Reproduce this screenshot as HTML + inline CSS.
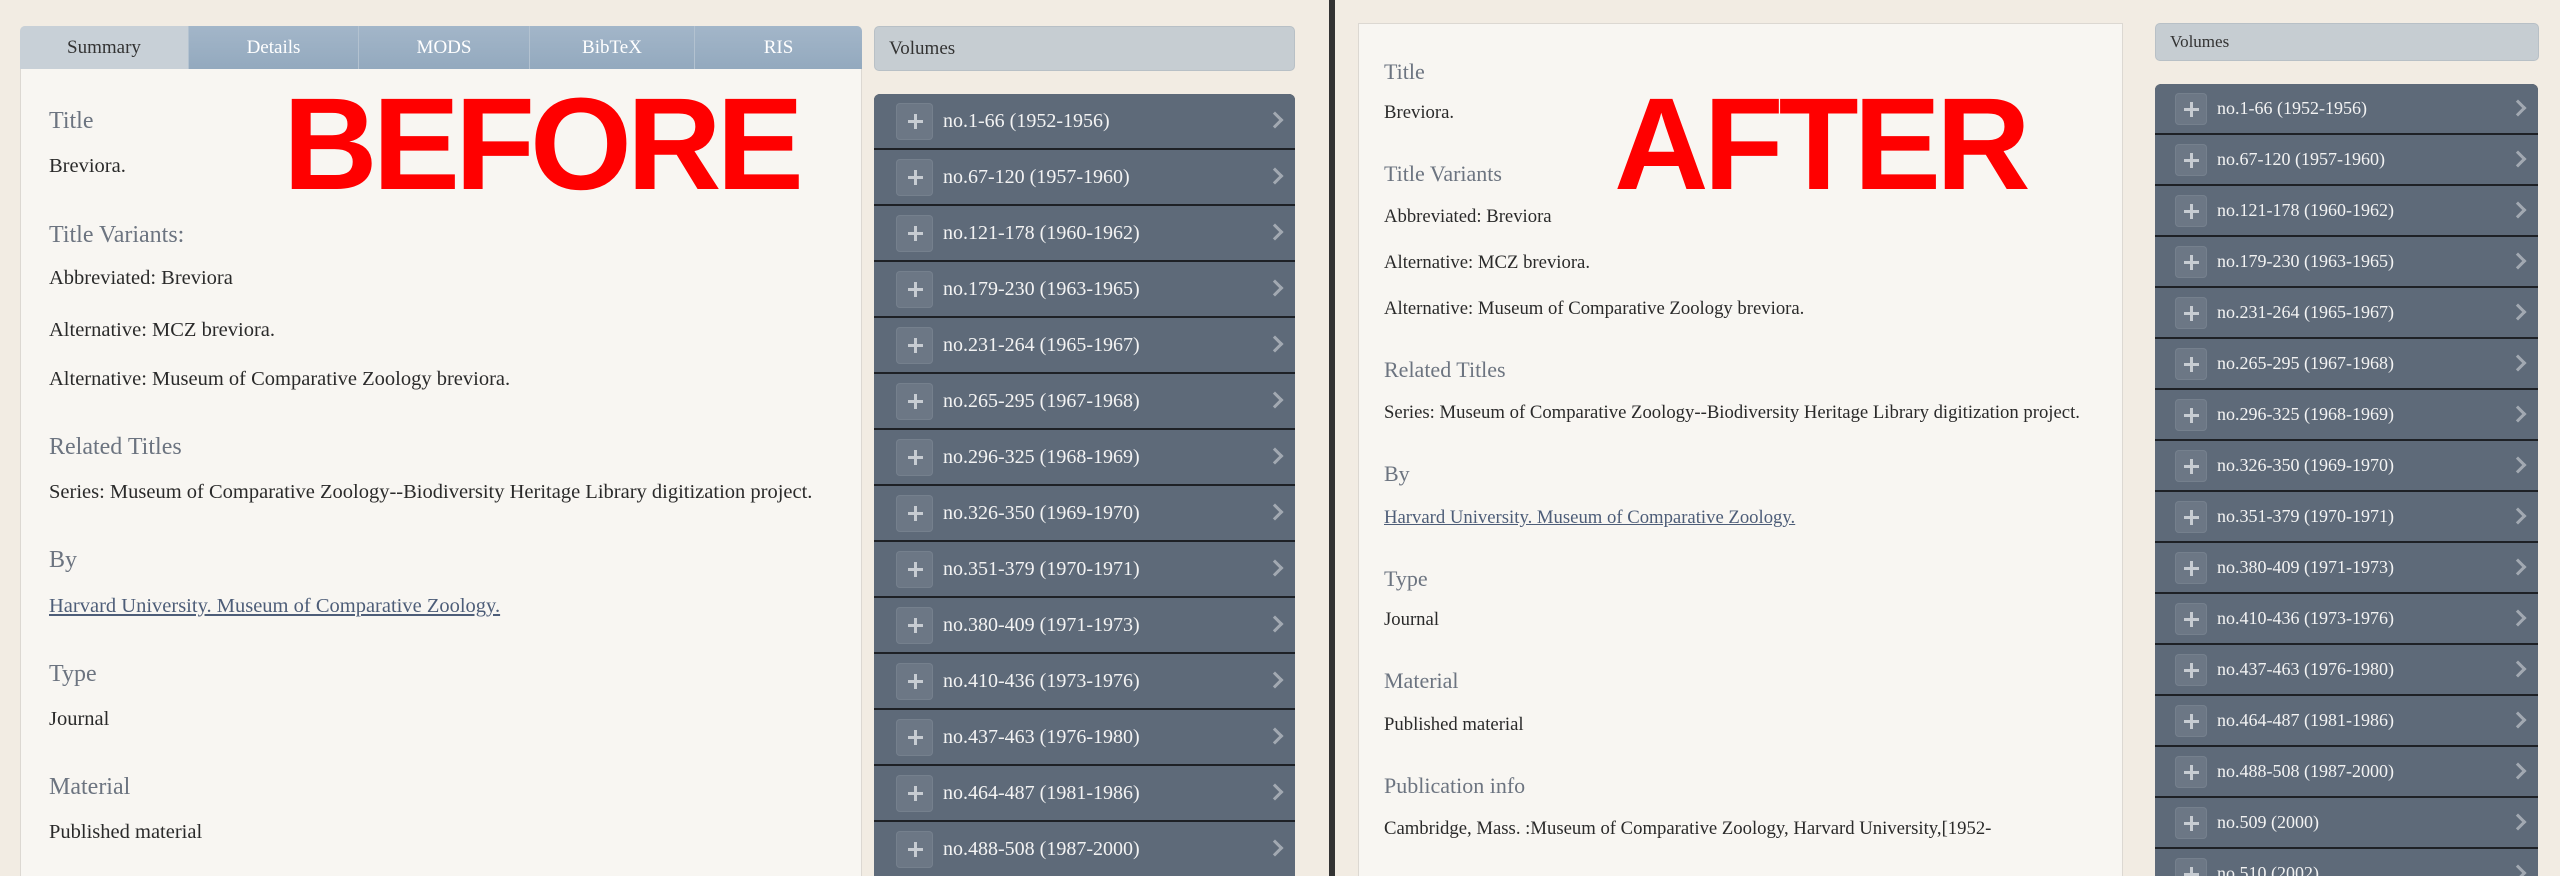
<!DOCTYPE html>
<html style="overflow:hidden;height:876px"><head><meta charset="utf-8"><style>
*{margin:0;padding:0;box-sizing:border-box}
body{width:2560px;height:876px;overflow:hidden;background:#f2ece3;font-family:"Liberation Serif",serif;position:relative}
.abs{position:absolute}
.panel{background:#f8f6f2;border:1px solid #dcd8d2;border-bottom:none}
.h{position:absolute;color:#6c7480;font-size:24px;white-space:nowrap}
.t{position:absolute;color:#2a2a2a;font-size:20.5px;white-space:nowrap}
.r .h{font-size:22px}
.r .t{font-size:18.7px}
.lnk{color:#4d5d78;text-decoration:underline}
.tab{position:absolute;top:26px;height:43px;line-height:43px;text-align:center;font-size:19px;color:#fff;background:linear-gradient(#a3b6c9,#93a9be);border-right:1px solid #b3c2d0}
.volh{position:absolute;background:#c6cdd2;border-radius:5px;border:1px solid #b8c0c6;color:#333;font-size:19px;padding-left:14px}
.list{position:absolute;border-radius:6px 6px 0 0;overflow:hidden;background:#222}
.row{position:relative;background:#5e6a79;border-bottom:2px solid #1e2126;color:#f3f3f3;white-space:nowrap}
.row .p{position:absolute;left:20px;width:37px;height:37px;border-radius:4px;background:#6c7785;box-shadow:inset 0 0 0 1px #75808d}
.row .p:before{content:"";position:absolute;left:calc(50% - 7px);top:calc(50% - 1.5px);width:15px;height:3px;background:#c7ccd2}
.row .p:after{content:"";position:absolute;left:calc(50% - 1px);top:calc(50% - 7.5px);width:3px;height:15px;background:#c7ccd2}
.row .c{position:absolute;right:14px;width:12px;height:12px;border-top:3px solid #a2a9b2;border-right:3px solid #a2a9b2;transform:rotate(45deg)}
.big{position:absolute;color:#ff0000;font-family:"Liberation Sans",sans-serif;font-weight:bold;font-size:131px;line-height:1;white-space:nowrap}
</style></head><body>
<div class="abs" style="left:1329px;top:0;width:6px;height:876px;background:#333"></div>

<div class="abs panel" style="left:20px;top:26px;width:842px;height:850px;border-radius:5px 5px 0 0"></div>
<div class="tab" style="left:20px;width:169px;background:#c8d0d7;color:#333;border-radius:5px 0 0 0">Summary</div>
<div class="tab" style="left:189px;width:170px">Details</div>
<div class="tab" style="left:359px;width:171px">MODS</div>
<div class="tab" style="left:530px;width:165px">BibTeX</div>
<div class="tab" style="left:695px;width:167px;border-right:none;border-radius:0 5px 0 0">RIS</div>
<div class="h" style="left:49px;top:108px">Title</div>
<div class="t" style="left:49px;top:155px">Breviora.</div>
<div class="h" style="left:49px;top:222px">Title Variants:</div>
<div class="t" style="left:49px;top:267px">Abbreviated: Breviora</div>
<div class="t" style="left:49px;top:319px">Alternative: MCZ breviora.</div>
<div class="t" style="left:49px;top:368px">Alternative: Museum of Comparative Zoology breviora.</div>
<div class="h" style="left:49px;top:434px">Related Titles</div>
<div class="t" style="left:49px;top:481px">Series: Museum of Comparative Zoology--Biodiversity Heritage Library digitization project.</div>
<div class="h" style="left:49px;top:547px">By</div>
<div class="t lnk" style="left:49px;top:595px">Harvard University. Museum of Comparative Zoology.</div>
<div class="h" style="left:49px;top:661px">Type</div>
<div class="t" style="left:49px;top:708px">Journal</div>
<div class="h" style="left:49px;top:774px">Material</div>
<div class="t" style="left:49px;top:821px">Published material</div>
<div class="big" style="left:283px;top:78px;letter-spacing:-5px">BEFORE</div>

<div class="volh" style="left:874px;top:26px;width:421px;height:45px;line-height:43px">Volumes</div>
<div class="list" style="left:874px;top:94px;width:421px;height:782px"><div id="L"></div></div>

<div class="r">
<div class="abs panel" style="left:1358px;top:23px;width:765px;height:853px"></div>
<div class="h" style="left:1384px;top:59px">Title</div>
<div class="t" style="left:1384px;top:102px">Breviora.</div>
<div class="h" style="left:1384px;top:161px">Title Variants</div>
<div class="t" style="left:1384px;top:206px">Abbreviated: Breviora</div>
<div class="t" style="left:1384px;top:252px">Alternative: MCZ breviora.</div>
<div class="t" style="left:1384px;top:298px">Alternative: Museum of Comparative Zoology breviora.</div>
<div class="h" style="left:1384px;top:357px">Related Titles</div>
<div class="t" style="left:1384px;top:402px">Series: Museum of Comparative Zoology--Biodiversity Heritage Library digitization project.</div>
<div class="h" style="left:1384px;top:461px">By</div>
<div class="t lnk" style="left:1384px;top:507px">Harvard University. Museum of Comparative Zoology.</div>
<div class="h" style="left:1384px;top:566px">Type</div>
<div class="t" style="left:1384px;top:609px">Journal</div>
<div class="h" style="left:1384px;top:668px">Material</div>
<div class="t" style="left:1384px;top:714px">Published material</div>
<div class="h" style="left:1384px;top:773px">Publication info</div>
<div class="t" style="left:1384px;top:818px">Cambridge, Mass. :Museum of Comparative Zoology, Harvard University,[1952-</div>
</div>
<div class="big" style="left:1614px;top:78px;letter-spacing:-5px">AFTER</div>

<div class="volh" style="left:2155px;top:23px;width:384px;height:38px;line-height:36px;font-size:17px">Volumes</div>
<div class="list" style="left:2155px;top:84px;width:383px;height:792px"><div id="R"></div></div>

<script>
var v=["no.1-66 (1952-1956)","no.67-120 (1957-1960)","no.121-178 (1960-1962)","no.179-230 (1963-1965)","no.231-264 (1965-1967)","no.265-295 (1967-1968)","no.296-325 (1968-1969)","no.326-350 (1969-1970)","no.351-379 (1970-1971)","no.380-409 (1971-1973)","no.410-436 (1973-1976)","no.437-463 (1976-1980)","no.464-487 (1981-1986)","no.488-508 (1987-2000)","no.509 (2000)","no.510 (2002)","no.511 (2003)"];
function build(id,h,fs,pl,tl,n,ps){var s="";for(var i=0;i<n;i++){var pt=Math.round((h-2-ps)/2);s+='<div class="row" style="height:'+h+'px;line-height:'+(h-2)+'px;font-size:'+fs+'px;padding-left:'+tl+'px"><div class="p" style="left:'+pl+'px;top:'+pt+'px;width:'+ps+'px;height:'+ps+'px"></div>'+v[i]+'<div class="c" style="top:'+Math.round((h-2)/2-7)+'px"></div></div>';}document.getElementById(id).innerHTML=s;}
build("L",56,20,22,69,15,37);
build("R",51,18,20,62,17,32);
</script>
</body></html>
